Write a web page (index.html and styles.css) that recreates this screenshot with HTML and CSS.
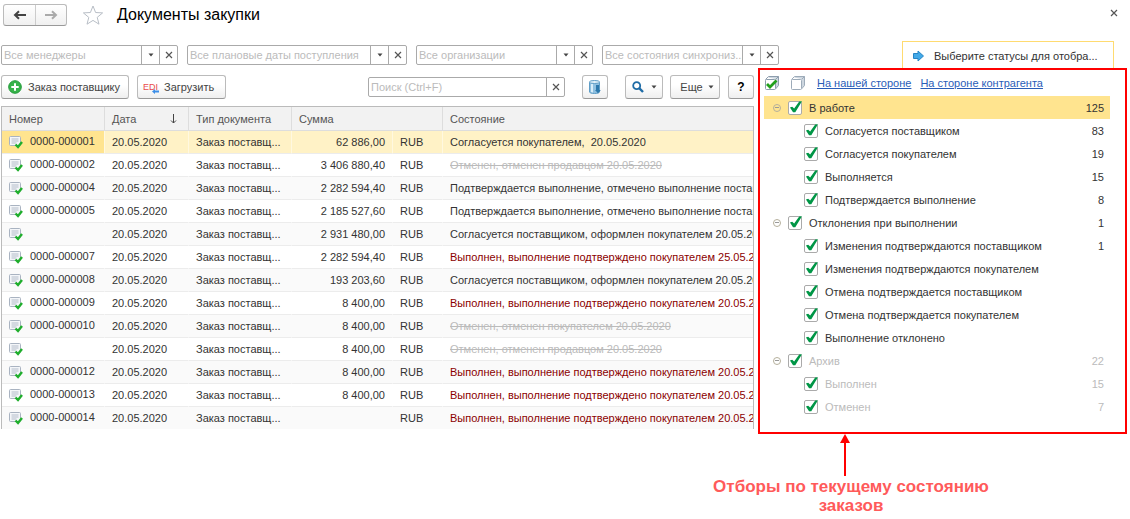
FILE: index.html
```html
<!DOCTYPE html>
<html lang="ru">
<head>
  <meta charset="UTF-8">
  <meta name="viewport" content="width=device-width, initial-scale=1.0">
  <title>Документы закупки</title>
  <link rel="stylesheet" href="styles.css">
</head>
<body>

  <!-- Shared icons -->
  <svg class="sprite" aria-hidden="true">
    <symbol id="doc" viewBox="0 0 14 14">
      <rect x="0.5" y="1.5" width="11" height="9" rx="1" fill="#f4f6f9" stroke="#a9b3c1"/>
      <path d="M2.500 4h7M2.500 6h7M2.500 8h5" stroke="#b3bcc9"/>
      <path d="M6.500 9.500l2.500 2.500 4-5" fill="none" stroke="#1fae2c" stroke-width="2.400"/>
    </symbol>
    <symbol id="down" viewBox="0 0 6 4"><path d="M0.500 0.500h5L3 3.500z" fill="#444"/></symbol>
    <symbol id="cross" viewBox="0 0 8 8"><path d="M1 1l6 6M7 1L1 7" stroke="#555" stroke-width="1.200"/></symbol>
  </svg>

  <header class="header">
    <div class="nav">
      <button type="button" aria-label="Назад"><svg width="14" height="10" viewBox="0 0 14 10"><path d="M13 5H3M6 1.200L2 5l4 3.800" fill="none" stroke="#444" stroke-width="2"/></svg></button>
      <button type="button" aria-label="Вперед"><svg width="14" height="10" viewBox="0 0 14 10"><path d="M1 5h10M8 1.200L12 5 8 8.800" fill="none" stroke="#aaa" stroke-width="2"/></svg></button>
    </div>
    <svg class="star" width="22" height="20" viewBox="0 0 22 20"><path d="M11 1l2.600 6.500 7 .4-5.400 4.500 1.800 6.800L11 15.400l-6 3.800 1.800-6.800L1.400 7.900l7-.4z" fill="#fff" stroke="#b8bec6"/></svg>
    <h1>Документы закупки</h1>
    <button type="button" class="close" aria-label="Закрыть"><svg width="8" height="8"><use href="#cross"/></svg></button>
  </header>

  <div class="filters">
    <div class="field">
      <input type="text" placeholder="Все менеджеры" aria-label="Менеджеры">
      <button type="button" aria-label="Выбрать"><svg width="6" height="4"><use href="#down"/></svg></button>
      <button type="button" aria-label="Очистить"><svg width="8" height="8"><use href="#cross"/></svg></button>
    </div>
    <div class="field wide">
      <input type="text" placeholder="Все плановые даты поступления" aria-label="Плановые даты">
      <button type="button" aria-label="Выбрать"><svg width="6" height="4"><use href="#down"/></svg></button>
      <button type="button" aria-label="Очистить"><svg width="8" height="8"><use href="#cross"/></svg></button>
    </div>
    <div class="field">
      <input type="text" placeholder="Все организации" aria-label="Организации">
      <button type="button" aria-label="Выбрать"><svg width="6" height="4"><use href="#down"/></svg></button>
      <button type="button" aria-label="Очистить"><svg width="8" height="8"><use href="#cross"/></svg></button>
    </div>
    <div class="field">
      <input type="text" placeholder="Все состояния синхрониз..." aria-label="Состояния синхронизации">
      <button type="button" aria-label="Выбрать"><svg width="6" height="4"><use href="#down"/></svg></button>
      <button type="button" aria-label="Очистить"><svg width="8" height="8"><use href="#cross"/></svg></button>
    </div>
    <div class="hint">
      <svg width="11" height="12" viewBox="0 0 11 12"><path d="M.5 3.500H5V1l5.500 5L5 11V8.500H.5z" fill="#42a9e8" stroke="#2784c4"/></svg>
      <span>Выберите статусы для отобра...</span>
    </div>
  </div>

  <main class="main">
    <section class="list">
      <div class="toolbar">
        <button type="button" class="btn create">
          <svg width="14" height="14" viewBox="0 0 14 14"><circle cx="7" cy="7" r="6.300" fill="#37b34a" stroke="#249a3a"/><path d="M7 3.300v7.400M3.300 7h7.400" stroke="#fff" stroke-width="2"/></svg>
          <span>Заказ поставщику</span>
        </button>
        <button type="button" class="btn load">
          <span class="edi">EDI<svg width="7" height="5" viewBox="0 0 7 5"><path d="M0 2.500L3 0v1.500h4v2H3V5z" fill="#3d8fe8"/></svg></span>
          <span>Загрузить</span>
        </button>
        <div class="field search">
          <input type="text" placeholder="Поиск (Ctrl+F)" aria-label="Поиск">
          <button type="button" aria-label="Очистить"><svg width="8" height="8"><use href="#cross"/></svg></button>
        </div>
        <button type="button" class="btn base" aria-label="Данные">
          <svg width="12" height="14" viewBox="0 0 12 14"><path d="M.5 2v10c0 .8 2 1.500 5 1.500s5-.7 5-1.500V2z" fill="#8fc0e0" stroke="#5f9dc6"/><path d="M2 4h2v8.500l-2-.5z" fill="#d9eef9"/><ellipse cx="5.500" cy="2" rx="5" ry="1.500" fill="#e3f2fa" stroke="#5f9dc6"/><path d="M7 5h3v5h1.800L9 13.200 6 10h1z" fill="#2c78ac"/></svg>
        </button>
        <button type="button" class="btn find" aria-label="Найти">
          <svg width="12" height="12" viewBox="0 0 12 12"><circle cx="4.700" cy="4.700" r="3.500" fill="#fff" stroke="#1f6ca6" stroke-width="1.800"/><path d="M7.200 7.200L11 11" stroke="#1f6ca6" stroke-width="2.400"/></svg>
          <svg width="6" height="4"><use href="#down"/></svg>
        </button>
        <button type="button" class="btn more">Еще <svg width="6" height="4"><use href="#down"/></svg></button>
        <button type="button" class="btn help">?</button>
      </div>

      <table class="docs">
        <colgroup>
          <col class="c-num"><col class="c-date"><col class="c-type"><col class="c-sum"><col class="c-cur"><col>
        </colgroup>
        <thead>
          <tr>
            <th>Номер</th>
            <th><div class="sorted">Дата <svg width="7" height="10" viewBox="0 0 7 10"><path d="M3.500 0v9M1 6.500L3.500 9 6 6.500" fill="none" stroke="#444"/></svg></div></th>
            <th>Тип документа</th>
            <th colspan="2">Сумма</th>
            <th>Состояние</th>
          </tr>
        </thead>
        <tbody>
          <tr class="current"><td><svg class="doc"><use href="#doc"/></svg>0000-000001</td><td>20.05.2020</td><td>Заказ поставщ...</td><td class="sum">62 886,00</td><td>RUB</td><td>Согласуется покупателем,&nbsp; 20.05.2020</td></tr>
          <tr><td><svg class="doc"><use href="#doc"/></svg>0000-000002</td><td>20.05.2020</td><td>Заказ поставщ...</td><td class="sum">3 406 880,40</td><td>RUB</td><td class="canceled">Отменен, отменен продавцом 20.05.2020</td></tr>
          <tr><td><svg class="doc"><use href="#doc"/></svg>0000-000004</td><td>20.05.2020</td><td>Заказ поставщ...</td><td class="sum">2 282 594,40</td><td>RUB</td><td>Подтверждается выполнение, отмечено выполнение поставщиком</td></tr>
          <tr><td><svg class="doc"><use href="#doc"/></svg>0000-000005</td><td>20.05.2020</td><td>Заказ поставщ...</td><td class="sum">2 185 527,60</td><td>RUB</td><td>Подтверждается выполнение, отмечено выполнение поставщиком</td></tr>
          <tr><td><svg class="doc"><use href="#doc"/></svg></td><td>20.05.2020</td><td>Заказ поставщ...</td><td class="sum">2 931 480,00</td><td>RUB</td><td>Согласуется поставщиком, оформлен покупателем 20.05.2020</td></tr>
          <tr><td><svg class="doc"><use href="#doc"/></svg>0000-000007</td><td>20.05.2020</td><td>Заказ поставщ...</td><td class="sum">2 282 594,40</td><td>RUB</td><td class="done">Выполнен, выполнение подтверждено покупателем 25.05.2020</td></tr>
          <tr><td><svg class="doc"><use href="#doc"/></svg>0000-000008</td><td>20.05.2020</td><td>Заказ поставщ...</td><td class="sum">193 203,60</td><td>RUB</td><td>Согласуется поставщиком, оформлен покупателем 20.05.2020</td></tr>
          <tr><td><svg class="doc"><use href="#doc"/></svg>0000-000009</td><td>20.05.2020</td><td>Заказ поставщ...</td><td class="sum">8 400,00</td><td>RUB</td><td class="done">Выполнен, выполнение подтверждено покупателем 20.05.2020</td></tr>
          <tr><td><svg class="doc"><use href="#doc"/></svg>0000-000010</td><td>20.05.2020</td><td>Заказ поставщ...</td><td class="sum">8 400,00</td><td>RUB</td><td class="canceled">Отменен, отменен покупателем 20.05.2020</td></tr>
          <tr><td><svg class="doc"><use href="#doc"/></svg></td><td>20.05.2020</td><td>Заказ поставщ...</td><td class="sum">8 400,00</td><td>RUB</td><td class="canceled">Отменен, отменен продавцом 20.05.2020</td></tr>
          <tr><td><svg class="doc"><use href="#doc"/></svg>0000-000012</td><td>20.05.2020</td><td>Заказ поставщ...</td><td class="sum">8 400,00</td><td>RUB</td><td class="done">Выполнен, выполнение подтверждено покупателем 20.05.2020</td></tr>
          <tr><td><svg class="doc"><use href="#doc"/></svg>0000-000013</td><td>20.05.2020</td><td>Заказ поставщ...</td><td class="sum">8 400,00</td><td>RUB</td><td class="done">Выполнен, выполнение подтверждено покупателем 20.05.2020</td></tr>
          <tr><td><svg class="doc"><use href="#doc"/></svg>0000-000014</td><td>20.05.2020</td><td>Заказ поставщ...</td><td class="sum"></td><td>RUB</td><td class="done">Выполнен, выполнение подтверждено покупателем 20.05.2020</td></tr>
        </tbody>
      </table>
    </section>

    <!-- Status filter -->
    <aside class="statuses">
      <div class="status-bar">
        <button type="button" aria-label="Отметить все"><svg width="14" height="14" viewBox="0 0 14 14"><path d="M3 1.500L4.500.5h9v9L11 12V3z" fill="#cdd6df"/><path d="M.5 3.500l3-3h10v9l-3 3.500M10.500 3.500l3-3" fill="none" stroke="#8d9dad"/><rect x="0.500" y="3.500" width="10" height="10" rx="1" fill="#fff" stroke="#8d9dad"/><path d="M2 8l3 3 6.500-6.500" fill="none" stroke="#22a01c" stroke-width="2.800"/></svg></button>
        <button type="button" aria-label="Снять отметки"><svg width="14" height="14" viewBox="0 0 14 14"><path d="M3 1.500L4.500.5h9v9L11 12V3z" fill="#cdd6df"/><path d="M.5 3.500l3-3h10v9l-3 3.500M10.500 3.500l3-3" fill="none" stroke="#9dabb9"/><rect x="0.500" y="3.500" width="10" height="10" rx="1" fill="#fff" stroke="#9dabb9"/></svg></button>
        <a href="#">На нашей стороне</a>
        <a href="#">На стороне контрагента</a>
      </div>
      <ul class="tree">
        <li class="group selected"><button type="button" class="fold" aria-label="Свернуть"></button><label><input type="checkbox" checked>В работе</label><span>125</span></li>
        <li><label><input type="checkbox" checked>Согласуется поставщиком</label><span>83</span></li>
        <li><label><input type="checkbox" checked>Согласуется покупателем</label><span>19</span></li>
        <li><label><input type="checkbox" checked>Выполняется</label><span>15</span></li>
        <li><label><input type="checkbox" checked>Подтверждается выполнение</label><span>8</span></li>
        <li class="group"><button type="button" class="fold" aria-label="Свернуть"></button><label><input type="checkbox" checked>Отклонения при выполнении</label><span>1</span></li>
        <li><label><input type="checkbox" checked>Изменения подтверждаются поставщиком</label><span>1</span></li>
        <li><label><input type="checkbox" checked>Изменения подтверждаются покупателем</label></li>
        <li><label><input type="checkbox" checked>Отмена подтверждается поставщиком</label></li>
        <li><label><input type="checkbox" checked>Отмена подтверждается покупателем</label></li>
        <li><label><input type="checkbox" checked>Выполнение отклонено</label></li>
        <li class="group archive"><button type="button" class="fold" aria-label="Свернуть"></button><label><input type="checkbox" checked>Архив</label><span>22</span></li>
        <li class="archive"><label><input type="checkbox" checked>Выполнен</label><span>15</span></li>
        <li class="archive"><label><input type="checkbox" checked>Отменен</label><span>7</span></li>
      </ul>
    </aside>
  </main>

  <div class="note">
    <svg width="12" height="43" viewBox="0 0 12 43"><path d="M6 42V6" stroke="#f00" stroke-width="2"/><path d="M6 0l5 9H1z" fill="#f00"/></svg>
    <p>Отборы по текущему состоянию заказов</p>
  </div>

</body>
</html>
```

FILE: styles.css
```css
* {
  box-sizing: border-box;
}

body {
  margin: 0;
  background: #fff;
  color: #333;
  font-family: "Liberation Sans", Arial, sans-serif;
  font-size: 11px;
}

button,
input {
  font: inherit;
  color: inherit;
}

button {
  display: flex;
  align-items: center;
  justify-content: center;
  padding: 0;
  border: 0;
  background: none;
}

svg {
  flex: none;
}

.sprite {
  display: none;
}

/* Header */
.header {
  display: flex;
  align-items: center;
  height: 30px;
  padding: 0 12px 0 3px;
}

.nav {
  display: flex;
  height: 22px;
  border: 1px solid #bbb;
  border-bottom-color: #999;
  border-radius: 3px;
  background: linear-gradient(#fff, #f0f0f0);
}

.nav button {
  width: 31px;
}

.nav button + button {
  border-left: 1px solid #ccc;
}

.star {
  margin: 0 13px 0 15px;
}

h1 {
  margin: 0;
  color: #000;
  font-size: 16px;
  font-weight: normal;
}

.close {
  margin: 0 0 4px auto;
}

/* Filters */
.filters {
  display: flex;
  align-items: center;
  gap: 9px;
  height: 28px;
  margin-top: 11px;
  padding: 0 16px 0 1px;
}

.field {
  display: flex;
  width: 177px;
  height: 20px;
  border: 1px solid #aaa;
  border-radius: 2px;
  background: #fff;
}

.field.wide {
  width: 220px;
}

.field input {
  flex: 1;
  min-width: 0;
  padding: 0 0 0 2px;
  border: 0;
  outline: 0;
  background: none;
}

.field input::placeholder {
  color: #bbb;
  opacity: 1;
}

.field button {
  width: 18px;
  border-left: 1px solid #aaa;
}

.hint {
  display: flex;
  align-items: center;
  align-self: stretch;
  gap: 10px;
  width: 212px;
  margin-left: auto;
  padding-left: 10px;
  border: 1px solid #ffdb70;
  border-bottom: 0;
}

/* Document list */
.main {
  display: flex;
  align-items: flex-start;
  gap: 4px;
  padding: 0 3px 0 1px;
  margin-top: -1px;
}

.list {
  flex: 1;
  min-width: 0;
}

.toolbar {
  display: flex;
  align-items: center;
  height: 38px;
}

.btn {
  height: 24px;
  border: 1px solid #bbb;
  border-bottom-color: #999;
  border-radius: 3px;
  background: linear-gradient(#fff 40%, #efefef);
  color: #444;
}

.create,
.load {
  justify-content: flex-start;
  gap: 6px;
}

.create {
  width: 128px;
  padding-left: 6px;
}

.load {
  width: 89px;
  margin-left: 8px;
  padding-left: 5px;
}

.edi {
  position: relative;
  color: #ea4b4b;
  font-size: 9px;
}

.edi svg {
  position: absolute;
  right: -1px;
  bottom: -2px;
}

.search {
  width: 197px;
  margin-left: auto;
}

.base {
  width: 26px;
  margin-left: 17px;
}

.find {
  gap: 7px;
  width: 38px;
  margin-left: 17px;
}

.more {
  gap: 5px;
  width: 50px;
  margin-left: 7px;
  padding-left: 4px;
}

.help {
  width: 26px;
  margin-left: 8px;
  color: #000;
  font-size: 12px;
  font-weight: bold;
}

.docs {
  width: 100%;
  table-layout: fixed;
  border: 1px solid #bbb;
  border-bottom: 0;
  border-spacing: 0;
}

.c-num { width: 102px; }
.c-date { width: 84px; }
.c-type { width: 103px; }
.c-sum { width: 101px; }
.c-cur { width: 50px; }

.docs th,
.docs td {
  height: 23px;
  padding: 0 7px;
  overflow: hidden;
  white-space: nowrap;
  text-align: left;
  border-bottom: 1px solid #ececec;
}

.docs th {
  height: 24px;
  background: #f2f2f2;
  border-bottom-color: #ddd;
  color: #555;
  font-weight: normal;
}

.docs th + th {
  border-left: 1px solid #ddd;
}

.docs td + td {
  border-left: 1px solid transparent;
}

.docs td:last-child {
  padding-right: 0;
}

.docs tbody tr:nth-child(odd) {
  background: #fafafa;
}

.docs tbody tr.current {
  background: #fff2c6;
}

.docs .current td:first-child {
  background: #ffe48f;
}

.docs .current td + td {
  border-left-color: #fff8e0;
}

.docs tbody tr:last-child td {
  height: 22px;
  border-bottom: 0;
}

.docs .sum {
  text-align: right;
}

.docs .canceled {
  color: #bbb;
  text-decoration: line-through;
}

.docs .done {
  color: #8b0000;
}

.sorted {
  display: flex;
  align-items: center;
  justify-content: space-between;
  padding-right: 4px;
}

.doc {
  width: 14px;
  height: 14px;
  margin-right: 7px;
  vertical-align: -4px;
}

/* Status tree */
.statuses {
  width: 369px;
  padding: 0 15px 14px 4px;
  border: 2px solid #f00;
}

.status-bar {
  display: flex;
  align-items: center;
  height: 26px;
  padding-left: 1px;
}

.status-bar button {
  margin-right: 12px;
}

.status-bar a {
  margin-right: 9px;
  color: #2a5db8;
}

.tree {
  margin: 0;
  padding: 0;
  list-style: none;
}

.tree li {
  display: flex;
  align-items: center;
  justify-content: space-between;
  height: 23px;
  padding: 0 6px 0 40px;
}

.tree .group {
  justify-content: flex-start;
  padding-left: 9px;
}

.tree .group span {
  margin-left: auto;
}

.tree .selected {
  background: #ffe48f;
}

.tree .archive {
  color: #bbb;
}

.tree label {
  display: flex;
  align-items: center;
  gap: 7px;
}

.tree input {
  position: relative;
  appearance: none;
  width: 14px;
  height: 14px;
  margin: 0;
  border: 1px solid #aaa;
  border-radius: 2px;
  background: #fff;
}

.tree input:checked::before {
  content: "";
  position: absolute;
  inset: -1px;
  background: #009646;
  clip-path: polygon(14% 50%, 30% 44%, 44% 58%, 80% 8%, 100% 6%, 52% 84%, 36% 84%);
}

.fold {
  width: 8px;
  height: 8px;
  margin-right: 7px;
  border: 1px solid #b5b09c;
  border-radius: 50%;
}

.fold::before {
  content: "";
  width: 4px;
  height: 1px;
  background: #999;
}

/* Note under the panel */
.note {
  width: 280px;
  margin: 0 139px 0 auto;
  color: #ff5a5a;
  font-size: 17px;
  font-weight: bold;
  line-height: 19px;
  text-align: center;
}

.note svg {
  display: block;
  margin-left: 128px;
}

.note p {
  margin: 0;
}
```
